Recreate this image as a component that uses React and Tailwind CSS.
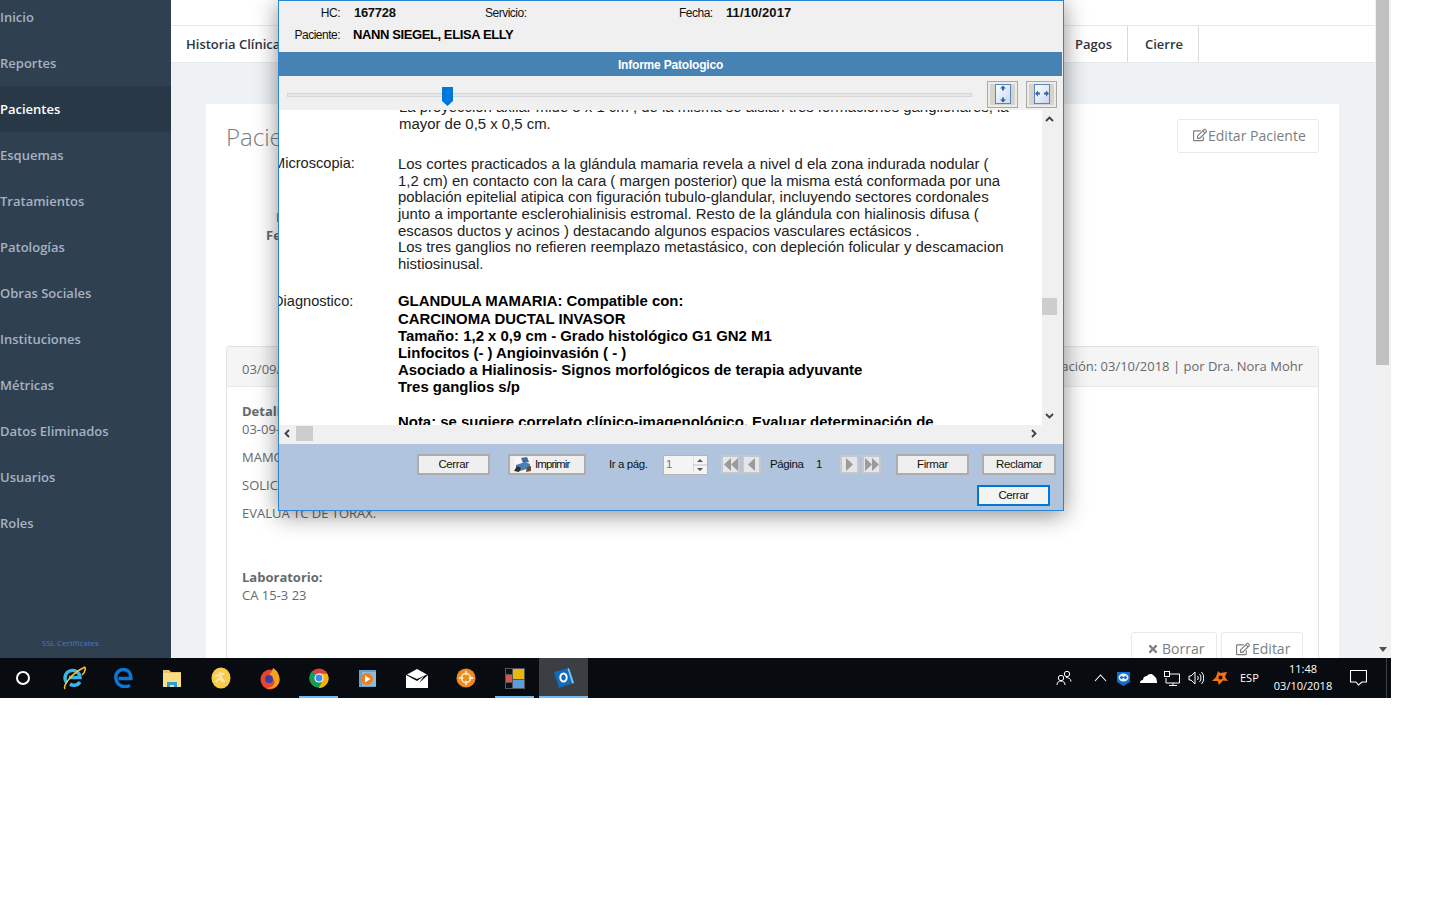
import React from 'react';
import { FaRegEdit, FaTimes } from 'react-icons/fa';

const menu = ['Inicio', 'Reportes', 'Pacientes', 'Esquemas', 'Tratamientos', 'Patologías', 'Obras Sociales', 'Instituciones', 'Métricas', 'Datos Eliminados', 'Usuarios', 'Roles'];

const Sidebar = () => (
  <aside className="w-[171px] shrink-0 bg-[#2f4050] flex flex-col overflow-hidden">
    <nav className="-mt-[6px]">
      {menu.map((item) => (
        <div
          key={item}
          className={
            item === 'Pacientes'
              ? 'h-[46px] pt-[2px] flex items-center bg-[#293846] text-white font-semibold text-[13px]'
              : 'h-[46px] pt-[2px] flex items-center text-[#a7b1c2] font-semibold text-[13px]'
          }
        >
          {item}
        </div>
      ))}
    </nav>
    <div className="mt-[91px] pr-[30px] text-center text-[8px] text-[#3a7bd0]">SSL Certificates</div>
  </aside>
);

const OutlineButton = ({ children, className }) => (
  <div className={`h-[34px] flex items-center border border-[#e7eaec] rounded-[3px] bg-white text-[14px] text-[#7b7e80] ${className}`}>
    {children}
  </div>
);

const Page = () => (
  <main className="flex-1 min-w-0 flex flex-col bg-[#eef2f5] overflow-hidden">
    <div className="h-[26px] shrink-0 bg-white border-b border-[#e7eaec] overflow-hidden">
      <div className="-mt-[17px] pl-[25px] text-[13px] text-[#676a6c]">Inicio &nbsp;/&nbsp; Pacientes</div>
    </div>
    <div className="h-[37px] shrink-0 bg-white border-b border-[#e7eaec] flex text-[13px] font-semibold text-[#2c3640]">
      <div className="pl-[15px] pr-[15px] pt-[1px] flex items-center">Historia Clínica</div>
      <div className="flex-1" />
      <div className="w-[68px] pl-[15px] pt-[1px] flex items-center border-r border-[#d8dadc]">Pagos</div>
      <div className="w-[71px] pl-[17px] pt-[1px] flex items-center border-r border-[#d8dadc]">Cierre</div>
      <div className="w-[176px]" />
    </div>
    <section className="mt-[41px] ml-[35px] w-[1133px] flex-1 bg-white px-5 pt-[15px] text-[13px] text-[#676a6c]">
      <div className="flex justify-between">
        <h2 className="font-light text-[24px] leading-[34px] mt-[1px] text-[#7b7e80]">Pacientes</h2>
        <OutlineButton className="w-[142px] pl-[15px] pb-[2px] gap-[1px]"><FaRegEdit className="text-[14px]" />Editar Paciente</OutlineButton>
      </div>
      <div className="h-[192px] pt-[54px] font-bold leading-[18px]">
        <div className="ml-[50px]">Nombre:</div>
        <div className="ml-[40px]">Fecha Nac.:</div>
      </div>
      <div className="border border-[#e0e3e5] rounded-t-[3px] h-[400px]">
        <div className="h-[40px] bg-[#f5f5f5] border-b border-[#e7eaec] flex items-center justify-between px-[15px]">
          <span className="mt-[6px]">03/09/2018</span>
          <span>Modificación: 03/10/2018 | por Dra. Nora Mohr</span>
        </div>
        <div className="px-[15px] pt-[15px] leading-[18px]">
          <div className="font-bold">Detalle:</div>
          <p className="mb-[10px]">03-09-2018</p>
          <p className="mb-[10px]">MAMOGRAFIA</p>
          <p className="mb-[10px]">SOLICITA ECOGRAFIA</p>
          <p>EVALUA TC DE TORAX.</p>
          <div className="font-bold mt-[46px]">Laboratorio:</div>
          <p>CA 15-3 23</p>
          <div className="flex justify-end gap-1 mt-[28px]">
            <OutlineButton className="w-[86px] pl-[15px] gap-[3px]"><FaTimes className="text-[12px]" />Borrar</OutlineButton>
            <OutlineButton className="w-[82px] pl-[14px] gap-[2px]"><FaRegEdit className="text-[14px]" />Editar</OutlineButton>
          </div>
        </div>
      </div>
    </section>
  </main>
);

const PageScrollbar = () => (
  <div className="w-[16px] shrink-0 bg-[#f1f1f1] relative">
    <div className="w-[13px] ml-[1px] h-[365px] bg-[#c1c1c1]" />
    <svg className="absolute left-[4px] bottom-[6px]" width="8" height="5" viewBox="0 0 8 5"><path d="M0 0h8L4 5z" fill="#505050" /></svg>
  </div>
);

const WinButton = ({ children, className }) => (
  <div className={`h-[21px] flex items-center border-2 text-[11.5px] text-[#111] ${className}`}>
    {children}
  </div>
);

const NavTri = ({ dir, double, className }) => (
  <div className={`h-[19px] w-[19px] flex items-center justify-center bg-[#e4e6ea] border-2 border-[#c6c8cc] ${className}`}>
    <svg width={double ? 15 : 9} height="13" viewBox={double ? '0 0 15 13' : '0 0 9 13'}>
      {dir === 'left' ? (
        <>
          <path d="M8 0v13L1 6.5z" fill="#9b9b9b" />
          {double && <path d="M15 0v13L8 6.5z" fill="#9b9b9b" />}
        </>
      ) : (
        <>
          <path d="M1 0v13l7-6.5z" fill="#9b9b9b" />
          {double && <path d="M8 0v13l7-6.5z" fill="#9b9b9b" />}
        </>
      )}
    </svg>
  </div>
);

const FitButton = ({ horizontal, className }) => (
  <div className={`w-[31px] h-[27px] mt-[2px] border border-[#a8a8a8] bg-[#ececec] p-[2px] ${className}`}>
    <div className="h-full bg-[#d6d3cb] flex items-center justify-center">
      <svg width="16" height="20" viewBox="0 0 16 20">
        <defs>
          <linearGradient id={horizontal ? 'fitH' : 'fitV'} x1="0" y1="0" x2="1" y2="1">
            <stop offset="0" stopColor="#ffffff" />
            <stop offset="1" stopColor="#c6d8f0" />
          </linearGradient>
        </defs>
        <rect x="0.5" y="0.5" width="15" height="19" fill={`url(#${horizontal ? 'fitH' : 'fitV'})`} stroke="#5b86bd" />
        {horizontal ? (
          <path d="M1 9.500l3-3v2h2v2H4v2zM15 9.500l-3-3v2h-2v2h2v2z" fill="#2f68a8" />
        ) : (
          <path d="M8 1.500l3 3H9v2H7v-2H5zM8 18.500l3-3H9v-2H7v2H5z" fill="#2f68a8" />
        )}
      </svg>
    </div>
  </div>
);

const Chevron = ({ d, className }) => (
  <svg className={className} width="9" height="9" viewBox="0 0 9 9" fill="none" stroke="#404040" strokeWidth="1.8"><path d={d} /></svg>
);

const PrinterIcon = () => (
  <svg width="18" height="15" viewBox="0 0 18 15">
    <rect x="0" y="0" width="18" height="15" fill="#f6f6f6" />
    <path d="M7 1l6-1 2 5-6 1z" fill="#3a6ea5" />
    <path d="M2 8l9-3 5 2v4l-10 3-4-2z" fill="#4b7eb3" />
    <path d="M0 14l3-5 4 2-2 4z" fill="#3b2b20" />
    <path d="M13 10l4-1v5l-5 1z" fill="#6b4a2f" />
  </svg>
);

const ReportWindow = () => (
  <div className="absolute left-[278px] top-0 w-[786px] h-[511px] border border-[#2b85d6] bg-[#f0f0f0] flex flex-col shadow-[0_4px_22px_rgba(0,0,0,0.45)] font-['Liberation_Sans',sans-serif] text-[#111]">
    <div className="h-[51px] shrink-0 relative text-[12px] tracking-[-0.5px]">
      <div className="flex items-center h-[24px]">
        <span className="w-[61px] text-right">HC:</span>
        <b className="ml-[14px] w-[131px] text-[13px] tracking-[-0.3px]">167728</b>
        <span className="w-[194px]">Servicio:</span>
        <span className="w-[47px]">Fecha:</span>
        <b className="text-[13px] tracking-[0.1px]">11/10/2017</b>
      </div>
      <div className="flex items-center h-[20px]">
        <span className="w-[61px] text-right">Paciente:</span>
        <b className="ml-[13px] text-[13px] tracking-[-0.4px] text-black">NANN SIEGEL, ELISA ELLY</b>
      </div>
    </div>
    <div className="h-[24px] w-[783px] pt-[1px] shrink-0 bg-[#4682b4] text-white font-bold text-[12px] tracking-[-0.2px] flex items-center justify-center">Informe Patologico</div>
    <div className="h-[34px] shrink-0 flex items-center relative">
      <div className="ml-[8px] mt-[4px] w-[685px] h-[4px] bg-[#e6e6e6] border border-[#d6d6d6]" />
      <svg className="absolute left-[163px] top-[11px]" width="11" height="19" viewBox="0 0 11 19"><path d="M0 0h11v14l-5.5 5L0 14z" fill="#0078d7" /></svg>
      <FitButton className="ml-[15px]" />
      <FitButton horizontal className="ml-[8px]" />
    </div>
    <div className="h-[315px] shrink-0 flex">
      <div className="w-[763px] bg-white overflow-hidden text-[14.93px] leading-[16.6px] text-[#222]">
        <div className="-mt-[11px] ml-[120px]">
          <p className="whitespace-nowrap">La proyección axilar mide 3 x 1 cm ; de la misma se aislan tres formaciones ganglionares, la</p>
          <p>mayor de 0,5 x 0,5 cm.</p>
        </div>
        <div className="flex mt-[24px] -ml-[6px]">
          <div className="w-[125px] shrink-0 -mt-[1px] text-[14.6px]">Microscopia:</div>
          <div className="whitespace-nowrap">
            <p>Los cortes practicados a la glándula mamaria revela a nivel d ela zona indurada nodular (</p>
            <p>1,2 cm) en contacto con la cara ( margen posterior) que la misma está conformada por una</p>
            <p>población epitelial atipica con figuración tubulo-glandular, incluyendo sectores cordonales</p>
            <p>junto a importante esclerohialinisis estromal. Resto de la glándula con hialinosis difusa (</p>
            <p>escasos ductos y acinos ) destacando algunos espacios vasculares ectásicos .</p>
            <p>Los tres ganglios no refieren reemplazo metastásico, con depleción folicular y descamacion</p>
            <p>histiosinusal.</p>
          </div>
        </div>
        <div className="flex mt-[20px] -ml-[6px]">
          <div className="w-[125px] shrink-0 mt-[1px] text-[14.6px]">Diagnostico:</div>
          <div className="whitespace-nowrap font-bold text-black leading-[17.2px]">
            <p>GLANDULA MAMARIA: Compatible con:</p>
            <p>CARCINOMA DUCTAL INVASOR</p>
            <p>Tamaño: 1,2 x 0,9 cm - Grado histológico G1 GN2 M1</p>
            <p>Linfocitos (- ) Angioinvasión ( - )</p>
            <p>Asociado a Hialinosis- Signos morfológicos de terapia adyuvante</p>
            <p>Tres ganglios s/p</p>
            <p className="mt-[17px]">Nota: se sugiere correlato clínico-imagenológico. Evaluar determinación de</p>
          </div>
        </div>
      </div>
      <div className="w-[20px] relative">
        <Chevron className="absolute left-[3px] top-[5px]" d="M1 6l3.5-3.5L8 6" />
        <div className="absolute left-0 top-[188px] w-[15px] h-[17px] bg-[#cdcdcd]" />
        <Chevron className="absolute left-[3px] bottom-[5px]" d="M1 3l3.5 3.5L8 3" />
      </div>
    </div>
    <div className="h-[19px] shrink-0 relative">
      <Chevron className="absolute left-[4px] top-[4px]" d="M6 1L2.5 4.5 6 8" />
      <div className="absolute left-[17px] top-[1px] w-[17px] h-[15px] bg-[#cdcdcd]" />
      <Chevron className="absolute left-[750px] top-[4px]" d="M3 1l3.5 3.5L3 8" />
    </div>
    <div className="flex-1 bg-[#b0c4de] pt-[10px]">
      <div className="flex items-center text-[11.5px] tracking-[-0.4px]">
        <WinButton className="ml-[138px] w-[73px] justify-center tracking-[-0.4px] border-[#adadad] bg-[#efefef]">Cerrar</WinButton>
        <WinButton className="ml-[18px] w-[78px] pl-[4px] gap-[3px] tracking-[-0.9px] border-[#adadad] bg-[#efefef]"><PrinterIcon />Imprimir</WinButton>
        <span className="ml-[23px] w-[54px]">Ir a pág.</span>
        <div className="w-[45px] h-[20px] bg-[#f4f4f4] border border-[#b5b5b5] flex items-center justify-between pl-[2px] text-[#777]">
          1
          <svg width="14" height="16" viewBox="0 0 14 16"><path d="M0 0v16M0 8h14" stroke="#c4c4c4" /><path d="M4 5l3-3 3 3zM4 11l3 3 3-3z" fill="#555" /></svg>
        </div>
        <NavTri dir="left" double className="ml-[13px]" />
        <NavTri dir="left" className="ml-[2px]" />
        <span className="ml-[9px] w-[46px]">Página</span>
        <span className="w-[24px]">1</span>
        <NavTri dir="right" />
        <NavTri dir="right" double className="ml-[3px]" />
        <WinButton className="ml-[15px] w-[73px] justify-center tracking-[-0.4px] border-[#adadad] bg-[#efefef]">Firmar</WinButton>
        <WinButton className="ml-[13px] w-[74px] justify-center tracking-[-0.4px] border-[#adadad] bg-[#efefef]">Reclamar</WinButton>
      </div>
      <div className="flex">
        <WinButton className="ml-[698px] mt-[10px] w-[73px] justify-center tracking-[-0.4px] border-[#0078d7] bg-[#f4f4f4]">Cerrar</WinButton>
      </div>
    </div>
  </div>
);

const TaskIcon = ({ children, active, underline }) => (
  <div className={`w-[49px] h-10 flex items-center justify-center relative ${active ? 'bg-[#3b3e43]' : ''}`}>
    {children}
    {underline && <div className={`absolute bottom-0 h-[2px] bg-[#76b9ed] ${active ? 'inset-x-0' : 'inset-x-[5px]'}`} />}
  </div>
);

const Taskbar = () => (
  <footer className="h-10 shrink-0 bg-[#080b10] flex items-center text-white font-['Open_Sans',sans-serif]">
    <div className="w-[49px] flex justify-center pr-[3px]">
      <div className="w-[14px] h-[14px] rounded-full border-2 border-white" />
    </div>
    <TaskIcon>
      <svg width="24" height="24" viewBox="0 0 24 24" fill="none">
        <path d="M5 17a7.5 7.5 0 1 1 13-5.500H7M18 16a7 7 0 0 1-10 2" stroke="#3bb4e8" strokeWidth="3.400" />
        <path d="M3 23C1 20 8 8 23 1M23 1c1 3-1 6-3 8" stroke="#f2c230" strokeWidth="1.500" />
      </svg>
    </TaskIcon>
    <TaskIcon>
      <svg width="20" height="20" viewBox="0 0 20 20" fill="none">
        <path d="M17 17.500c-6 2.500-13 .5-14-6.500C2 5 6 1.500 10.500 1.500 15 1.500 18 5 18 10.500H5.500" stroke="#0a78d4" strokeWidth="3.400" />
      </svg>
    </TaskIcon>
    <TaskIcon>
      <svg width="20" height="19" viewBox="0 0 20 19">
        <path d="M1 1h6l2 2h10v3H1z" fill="#e9c46a" />
        <rect x="1" y="4" width="18" height="14" fill="#fbdd85" />
        <path d="M5 18v-5h10v5h-3v-2H8v2z" fill="#2a9fd6" />
      </svg>
    </TaskIcon>
    <TaskIcon>
      <svg width="20" height="22" viewBox="0 0 20 22">
        <ellipse cx="10" cy="11" rx="9.500" ry="10.500" fill="#f8cc4a" />
        <path d="M4 9c3-2 6 1 9-3M5 15c3-5 6-4 9 0M9 5l2 10" stroke="#fbe6b5" strokeWidth="2" fill="none" />
      </svg>
    </TaskIcon>
    <TaskIcon>
      <svg width="20" height="23" viewBox="0 0 20 23">
        <ellipse cx="10" cy="12.500" rx="9.500" ry="10" fill="#e8442e" />
        <path d="M13 1c5 3 7 8 6.500 13-1 6-8 9-13 7 5 0 8-3 8-6s-3-5-6-4c0-3 3-5 4.500-10z" fill="#f7a11b" />
        <circle cx="9" cy="12" r="4" fill="#3a3fa8" />
      </svg>
    </TaskIcon>
    <TaskIcon underline>
      <svg width="20" height="22" viewBox="0 0 22 22">
        <circle cx="11" cy="11" r="10.500" fill="#db4437" />
        <path d="M11 11L1.700 16.300A10.500 10.500 0 0 1 3.600 3.500z" fill="#0f9d58" />
        <path d="M11 22a10.500 10.500 0 0 0 9.100-15.800L11 6z" fill="#f4b400" />
        <path d="M1.700 16.300A10.500 10.500 0 0 0 11 21.500L15 14l-6 0z" fill="#0f9d58" />
        <circle cx="11" cy="11" r="5" fill="#fff" />
        <circle cx="11" cy="11" r="3.800" fill="#4285f4" />
      </svg>
    </TaskIcon>
    <TaskIcon>
      <svg width="18" height="19" viewBox="0 0 18 19">
        <rect x="0" y="1" width="17" height="17" fill="#6aa2c4" />
        <path d="M3 3h14v14H3z" fill="#8ebcd6" />
        <circle cx="8" cy="10" r="6" fill="#ef7d22" />
        <path d="M6 6.500v7l5.500-3.500z" fill="#fff" />
      </svg>
    </TaskIcon>
    <TaskIcon>
      <svg width="22" height="19" viewBox="0 0 22 19">
        <path d="M1 5.500L11 0l10 5.500L11 10z" fill="#fff" />
        <path d="M0 6l11 6 7-5-5 7 9-8v13H0z" fill="#fff" />
      </svg>
    </TaskIcon>
    <TaskIcon>
      <svg width="20" height="22" viewBox="0 0 22 22" fill="none">
        <circle cx="11" cy="11" r="10.500" fill="#ee8a1e" />
        <circle cx="11" cy="11" r="5" stroke="#fde3bd" strokeWidth="2" />
        <path d="M11 3v5M11 14v5M3 11h5M14 11h5" stroke="#fde3bd" strokeWidth="2" />
      </svg>
    </TaskIcon>
    <TaskIcon underline>
      <svg width="20" height="21" viewBox="0 0 20 21">
        <rect width="20" height="21" fill="#555" />
        <rect x="8" y="1" width="11" height="10" fill="#e9b50f" />
        <rect x="8" y="12" width="11" height="8" fill="#5b9be0" />
        <rect x="1" y="7" width="6" height="7" fill="#d9534f" />
        <rect x="1" y="1" width="6" height="5" fill="#111" />
        <rect x="1" y="15" width="6" height="5" fill="#111" />
      </svg>
    </TaskIcon>
    <TaskIcon active underline>
      <svg width="20" height="20" viewBox="0 0 20 20">
        <path d="M0 4L15 0l5 15-15 5z" fill="#0f6cbd" />
        <path d="M15 0l5 15-2 .5L13.500 1z" fill="#7cc0ea" />
        <ellipse cx="9.500" cy="9.500" rx="3.200" ry="4" fill="none" stroke="#fff" strokeWidth="2" />
      </svg>
    </TaskIcon>
    <div className="flex-1" />
    <svg className="mr-[22px]" width="16" height="16" viewBox="0 0 16 16" fill="none" stroke="#fff" strokeWidth="1">
      <circle cx="11" cy="4" r="2.700" /><circle cx="5" cy="8" r="2.700" />
      <path d="M1 15c0-3 2-4 4-4s4 1 4 4M10 7.500c2 0 5 1 5 4" />
    </svg>
    <svg className="mr-[10px]" width="13" height="8" viewBox="0 0 13 8" fill="none" stroke="#fff" strokeWidth="1.100"><path d="M1 7l5.500-6L12 7" /></svg>
    <svg className="mr-[10px]" width="13" height="15" viewBox="0 0 13 15">
      <path d="M0 1h13v10l-6.500 4L0 11z" fill="#0e6fd0" />
      <ellipse cx="6.500" cy="6.500" rx="5" ry="4" fill="#e8f2fb" />
      <path d="M3 6.500h7M3 6.500l2-1.500v3zM10 6.500l-2-1.500v3z" stroke="#0e6fd0" fill="#0e6fd0" />
    </svg>
    <svg className="mr-[7px]" width="17" height="11" viewBox="0 0 17 11"><path d="M0 10c0-2 1-3 3-3 0-3 2-4 4-4 1-2 5-3 7 0 2 1 3 3 3 7z" fill="#fff" /></svg>
    <svg className="mr-[8px]" width="16" height="15" viewBox="0 0 16 15" fill="none" stroke="#fff" strokeWidth="1">
      <path d="M5 3h10.500v9H2V7M9 12v2.500M5 14.500h8" /><rect x=".5" y=".5" width="5" height="5" />
    </svg>
    <svg className="mr-[8px]" width="16" height="14" viewBox="0 0 16 14" fill="none" stroke="#fff" strokeWidth="1">
      <path d="M1 5h2l4-4v12l-4-4H1zM9.500 5a3 3 0 0 1 0 4M11.500 3a6 6 0 0 1 0 8M13.500 1a9 9 0 0 1 0 12" />
    </svg>
    <svg className="mr-[12px]" width="16" height="16" viewBox="0 0 16 16">
      <path d="M6 1l2 2 7-1-2 5 3 4-5-.5L7 15l-1.500-4L0 11l4-4z" fill="#f47216" />
      <circle cx="8.500" cy="7.500" r="2" fill="#080b10" />
    </svg>
    <span className="text-[11px] w-[23px] mr-[10px]">ESP</span>
    <div className="w-[60px] -mt-[2px] text-center text-[11px] leading-[17px]">
      <div>11:48</div>
      <div>03/10/2018</div>
    </div>
    <svg className="ml-[17px] mr-[19px]" width="17" height="16" viewBox="0 0 17 16" fill="none" stroke="#fff" strokeWidth="1.100"><path d="M.5 .5h16v11.500h-4.500L8.500 15 6 12H.5z" /></svg>
    <div className="w-[1px] h-10 bg-[#3a3d42] mr-[4px]" />
  </footer>
);

export default function App() {
  return (
    <div className="relative w-[1440px] h-[900px] overflow-hidden bg-white font-['Open_Sans',sans-serif]">
      <div className="w-[1391px] h-[698px] flex flex-col">
        <div className="h-[658px] flex overflow-hidden">
          <Sidebar />
          <Page />
          <PageScrollbar />
        </div>
        <Taskbar />
      </div>
      <ReportWindow />
    </div>
  );
}
